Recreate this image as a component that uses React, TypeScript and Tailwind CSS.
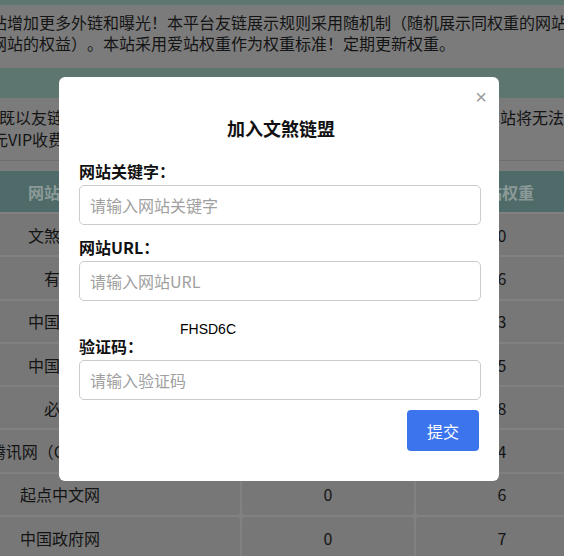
import React from "react";

const rows: [string, string, string][] = [
  ["文煞链盟", "0", "0"],
  ["有道", "0", "6"],
  ["中国知网", "0", "3"],
  ["中国日报", "0", "5"],
  ["必应", "0", "8"],
  ["腾讯网（QQ.com）", "0", "4"],
  ["起点中文网", "0", "6"],
  ["中国政府网", "0", "7"],
];

export default function App() {
  return (
    <div
      className="relative w-[564px] h-[556px] overflow-hidden bg-[#7b7b7b] text-[#141414] [text-spacing-trim:space-all]"
      style={{ fontFamily: '"Noto Sans CJK SC", "Noto Sans", sans-serif' }}
    >
      {/* page behind overlay */}
      <div className="h-[5px] bg-[#5e7670]" />
      <div className="h-[63px] bg-[#7b7b7b] pt-[7px] text-[16px] leading-[21px] whitespace-nowrap overflow-hidden">
        <div className="ml-[-9px]">站增加更多外链和曝光！本平台友链展示规则采用随机制（随机展示同权重的网站</div>
        <div className="ml-[-9px]">网站的权益）。本站采用爱站权重作为权重标准！定期更新权重。</div>
      </div>
      <div className="h-[30px] bg-[#5e7670]" />
      <div className="h-[62px] bg-[#7b7b7b] pt-[8px] text-[16px] leading-[22px] whitespace-nowrap overflow-hidden">
        <div className="flex justify-between">
          <span className="ml-[-1px]">既以友链交换为合作方式</span>
          <span>若对方撤下链接本站将无法</span>
        </div>
        <div className="ml-[-8px]">元VIP收费标准详情请咨询客服</div>
      </div>
      <div className="h-[1px] bg-[#6e6e6e]" />
      <div className="h-[10px] bg-[#7c7c7c]" />

      <div className="ml-[-120px] w-[708px] flex flex-col gap-[2px] bg-[#818181] text-[16px]">
        <div className="grid grid-cols-[360px_172px_172px] gap-x-[2px] h-[41px]">
          <div className="bg-[#4f6b69] flex items-center justify-center font-bold text-[#8b9a98]">网站名称</div>
          <div className="bg-[#4f6b69] flex items-center justify-center font-bold text-[#8b9a98]">百度权重</div>
          <div className="bg-[#4f6b69] flex items-center justify-center font-bold text-[#8b9a98]">爱站权重</div>
        </div>
        {rows.map((r, i) => (
          <div key={i} className="grid grid-cols-[360px_172px_172px] gap-x-[2px] h-[41.3px]">
            <div className="bg-[#777777] rounded-[4px] flex items-center justify-center">{r[0]}</div>
            <div className="bg-[#777777] rounded-[4px] flex items-center justify-center">{r[1]}</div>
            <div className="bg-[#777777] rounded-[4px] flex items-center justify-center">{r[2]}</div>
          </div>
        ))}
      </div>

      {/* modal */}
      <div className="absolute left-[59px] top-[77px] w-[440px] bg-white rounded-[6px] pl-5 pr-[18px] pb-[30px] flex flex-col text-[#111]">
        <div className="h-[39px] flex items-center justify-end mr-[-6px]">
          <span
            className="text-[20px] leading-[20px] text-[#9a9a9a]"
            style={{ fontFamily: '"Liberation Sans", Arial, sans-serif' }}
          >
            ×
          </span>
        </div>
        <div className="h-[24px] leading-[24px] text-[18px] font-bold text-center pl-[2px]">加入文煞链盟</div>

        <div className="mt-5 h-[22px] leading-[22px] text-[16px] font-bold">网站关键字：</div>
        <div className="mt-[3px] h-[40px] border border-[#cccccc] rounded-[5px] px-[10px] flex items-center text-[16px] text-[#a0a0a0]">
          请输入网站关键字
        </div>

        <div className="mt-[11px] h-[22px] leading-[22px] text-[16px] font-bold">网站URL：</div>
        <div className="mt-[3px] h-[40px] border border-[#cccccc] rounded-[5px] px-[10px] flex items-center text-[16px] text-[#a0a0a0]">
          请输入网站URL
        </div>

        <div className="mt-4 h-[40px] flex items-end">
          <div className="h-[22px] leading-[22px] text-[16px] font-bold">验证码：</div>
          <div
            className="w-[130px] h-[40px] pt-[4px] text-center text-[14px] leading-[16px] text-black"
            style={{ fontFamily: '"Liberation Sans", Arial, sans-serif' }}
          >
            FHSD6C
          </div>
        </div>
        <div className="mt-[3px] h-[40px] border border-[#cccccc] rounded-[5px] px-[10px] flex items-center text-[16px] text-[#a0a0a0]">
          请输入验证码
        </div>

        <div className="mt-[10px] flex justify-end">
          <div className="mr-[2px] w-[72px] h-[41px] rounded-[4px] bg-[#3c74ee] text-white text-[16px] flex items-center justify-center">
            提交
          </div>
        </div>
      </div>
    </div>
  );
}
